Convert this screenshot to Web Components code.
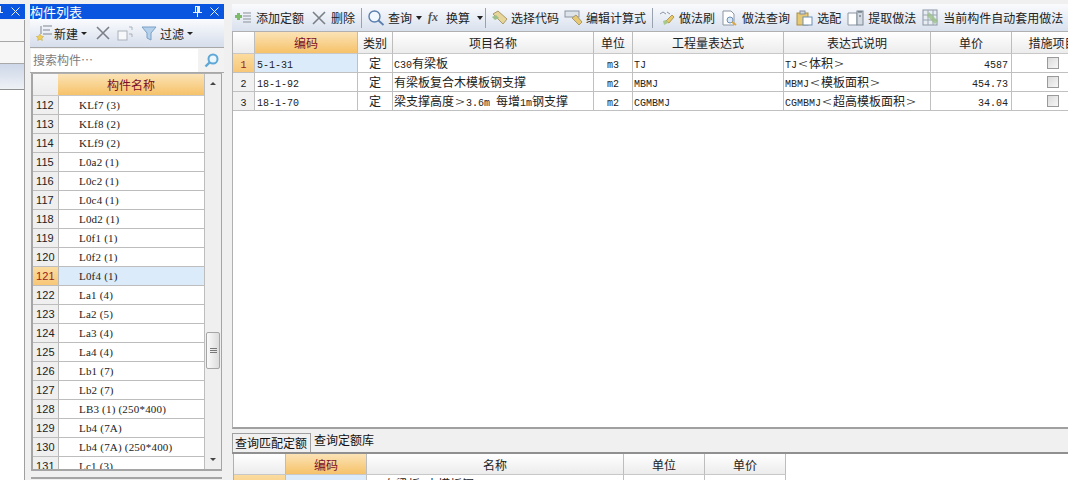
<!DOCTYPE html>
<html>
<head>
<meta charset="utf-8">
<style>
  html, body { margin: 0; height: 100%; overflow: hidden; background: #f0f0f0; }
  body { font: 12px "Noto Sans CJK SC", "Liberation Sans", sans-serif; color: #111; }
</style>
</head>
<body>
<app-shell>
  <dock-strip slot="strip"></dock-strip>
  <component-panel slot="list"></component-panel>
  <main-pane slot="main"></main-pane>
</app-shell>

<script>
const CELL_CSS = `
  .latin { font: 10px "Liberation Mono", monospace; }
  .cjk { font: 12px "Noto Sans CJK SC", sans-serif; }
  .wide { display: inline-block; width: 12px; text-align: center; font: 300 12px "Noto Sans CJK SC", sans-serif; transform: scale(1.4, 1.15); }
`;

// bitmap SimSun look: latin runs are 6px wide per char, CJK runs 12px, and <> sit in a full cell
function mixed(text) {
  return text.replace(/[\u4e00-\u9fff]+|[<>]|[^\u4e00-\u9fff<>]+/g, (run) => {
    if (run === '<') return '<span class="wide">&lt;</span>';
    if (run === '>') return '<span class="wide">&gt;</span>';
    return /[\u4e00-\u9fff]/.test(run) ? `<span class="cjk">${run}</span>` : `<span class="latin">${run}</span>`;
  });
}

const ICONS = {
  addList: `<svg width="19" height="16" viewBox="0 0 19 16"><path d="M9 3h8M9 6h8M9 9h8M9 12h8" stroke="#8a9199"/><path d="M3 3h3v2h2v3H6v2H3V8H1V5h2z" fill="#7dba6a"/></svg>`,
  x: `<svg width="14" height="14" viewBox="0 0 14 14"><path d="M1 1l12 12M13 1L1 13" stroke="#7b8088" stroke-width="1.6"/></svg>`,
  search: `<svg width="18" height="18" viewBox="0 0 18 18"><circle cx="7.500" cy="7.500" r="5.500" fill="#f2f8ff" stroke="#5b7fae" stroke-width="1.400"/><path d="M11.500 11.500l5 4.500" stroke="#5b7fae" stroke-width="1.800"/></svg>`,
  lens: `<svg width="15" height="15" viewBox="0 0 15 15"><circle cx="9" cy="6" r="4.500" fill="#eaf5fc" stroke="#5fa8d6" stroke-width="2"/><path d="M5.500 9.500l-4 4" stroke="#5fa8d6" stroke-width="2.400"/></svg>`,
  fx: `<span style="display:block;width:12px;font:italic bold 12px 'Liberation Serif',serif;color:#555">fx</span>`,
  pick: `<svg width="18" height="16" viewBox="0 0 18 16"><path d="M2 4l5-3 9 8-4 5z" fill="#e7d59a" stroke="#a99b6a"/><path d="M1 7l4-2 3 3-4 2z" fill="#9cc08a"/></svg>`,
  edit: `<svg width="20" height="16" viewBox="0 0 20 16"><rect x="1" y="1" width="14" height="6" fill="#dfe4ea" stroke="#8b95a3"/><path d="M8 8l4-3 6 7-3 3z" fill="#e7c873" stroke="#a99b6a"/></svg>`,
  brush: `<svg width="18" height="16" viewBox="0 0 18 16"><path d="M2 4l3-2 3 2M9 2l3 2" fill="none" stroke="#8a95a5"/><path d="M14 5l2 2-5 6-3-2z" fill="#e8c869" stroke="#b09a55"/><path d="M5 11l3-1 2 3-4 2z" fill="#a6c98c"/></svg>`,
  doc: `<svg width="17" height="16" viewBox="0 0 17 16"><path d="M2 1h8l3 3v11H2z" fill="#fff" stroke="#8b95a3"/><circle cx="9" cy="10" r="3" fill="#d8e8f7" stroke="#6d8fb5"/><path d="M11 12l4 3" stroke="#d8a848" stroke-width="2"/></svg>`,
  clip: `<svg width="17" height="16" viewBox="0 0 17 16"><rect x="1" y="3" width="11" height="12" fill="#e7c873" stroke="#a88f4e"/><rect x="4" y="1" width="5" height="3" fill="#cfd6de" stroke="#87909b"/><rect x="7" y="7" width="9" height="8" fill="#fff" stroke="#6d8fb5"/></svg>`,
  extract: `<svg width="18" height="16" viewBox="0 0 18 16"><path d="M1 3h9v12H1z" fill="#fff" stroke="#8b95a3"/><rect x="10" y="1" width="6" height="14" fill="#d3dae2" stroke="#7b8794"/><path d="M11 2h4M12 6h2" stroke="#4d5a68"/></svg>`,
  auto: `<svg width="18" height="17" viewBox="0 0 18 17"><rect x="1" y="1" width="14" height="15" fill="#e7edf3" stroke="#8b95a3"/><path d="M1 6h14M1 11h14M6 1v15M11 1v15" stroke="#9aa5b1"/><path d="M7 3l9 9-3 3-8-8z" fill="#9cc08a" opacity=".8"/></svg>`,
  newItem: `<svg width="18" height="18" viewBox="0 0 18 18"><path d="M8 2h9M8 6h7M8 10h9" stroke="#7f8791"/><path d="M6 2v8" stroke="#7f8791"/><path d="M5 10l1.300 2.200 2.400.3-1.800 1.700.5 2.300L5 15.300l-2.400 1.200.5-2.300-1.800-1.700 2.400-.3z" fill="#f0cf54" stroke="#c5a33a" stroke-width=".5"/></svg>`,
  copy: `<svg width="16" height="15" viewBox="0 0 16 15"><rect x="1" y="5" width="9" height="9" fill="#f7f8fa" stroke="#aab1ba"/><path d="M12 1h3v3M12 8h3v3" fill="none" stroke="#aab1ba"/></svg>`,
  filter: `<svg width="16" height="15" viewBox="0 0 16 15"><path d="M1 1h14L10 7v7l-4-2V7z" fill="#b4d0ea" stroke="#7ba0c6"/></svg>`,
  pin: `<svg width="9" height="11" viewBox="0 0 9 11"><path d="M2 0h5v6h2v1H5v4H4V7H0V6h2zM3 1v5h1V1z" fill="currentColor"/></svg>`,
  close: `<svg width="9" height="9" viewBox="0 0 9 9"><path d="M.5.5l8 8M8.500.5l-8 8" stroke="currentColor"/></svg>`
};

class AppShell extends HTMLElement {
  connectedCallback() {
    this.attachShadow({ mode: 'open' });
    this.shadowRoot.innerHTML = `
      <style>
        :host { display: flex; width: 1068px; height: 480px; padding-top: 4px; box-sizing: border-box; background: #f0f0f0; }
        ::slotted(*) { flex: none; }
        ::slotted(dock-strip) { margin-right: 5px; }
        ::slotted(component-panel) { margin-right: 8px; }
      </style>
      <slot name="strip"></slot>
      <slot name="list"></slot>
      <slot name="main"></slot>`;
  }
}

class TitleBar extends HTMLElement {
  connectedCallback() {
    this.attachShadow({ mode: 'open' });
    this.shadowRoot.innerHTML = `
      <style>
        :host { display: flex; align-items: center; height: 15px; background: #0a55e0; color: #fff; font: 13px/15px "Noto Sans CJK SC", sans-serif; }
        .t { flex: 1; white-space: nowrap; }
        .b { display: flex; align-items: center; gap: 8px; padding-right: 5px; color: #e8f0ff; }
        svg { display: block; }
      </style>
      <span class="t"><slot></slot></span>
      <span class="b">${ICONS.pin}${ICONS.close}</span>`;
  }
}

class DockStrip extends HTMLElement {
  connectedCallback() {
    this.attachShadow({ mode: 'open' });
    this.shadowRoot.innerHTML = `
      <style>
        :host { display: flex; flex-direction: column; width: 25px; height: 476px; box-sizing: border-box; }
        title-bar { flex: none; margin-left: -9px; }
        .body { flex: 1; margin-top: 1px; border-right: 1px solid #a0a0a0; background: #f0f0f0; }
        .r { height: 22px; box-sizing: border-box; border-bottom: 1px solid #a8a8a8; background: #f6f6f6; }
        .sel { height: 26px; box-sizing: border-box; background: linear-gradient(#cdd7e8, #eef1f6); border-bottom: 1px solid #909090; }
        .rest { height: calc(100% - 70px); background: #fff; }
      </style>
      <title-bar></title-bar>
      <div class="body">
        <div class="r"></div><div class="r"></div><div class="sel"></div><div class="rest"></div>
      </div>`;
  }
}

class ComponentPanel extends HTMLElement {
  connectedCallback() {
    const names = ['KLf7 (3)','KLf8 (2)','KLf9 (2)','L0a2 (1)','L0c2 (1)','L0c4 (1)','L0d2 (1)','L0f1 (1)','L0f2 (1)','L0f4 (1)','La1 (4)','La2 (5)','La3 (4)','La4 (4)','Lb1 (7)','Lb2 (7)','LB3 (1) (250*400)','Lb4 (7A)','Lb4 (7A) (250*400)','Lc1 (3)'];
    const rows = names.map((n, i) => {
      const num = 112 + i;
      return `<div class="row ${num === 121 ? 'sel' : ''}"><span class="no">${num}</span><span class="nm">${n}</span></div>`;
    }).join('');
    this.attachShadow({ mode: 'open' });
    this.shadowRoot.innerHTML = `
      <style>
        :host { display: flex; flex-direction: column; width: 194px; height: 476px; box-sizing: border-box; }
        .tools { display: flex; align-items: center; height: 28px; padding-left: 5px; box-sizing: border-box; background: linear-gradient(#fafbfd, #d6deec); font-size: 12px; color: #222; white-space: nowrap; }
        .tools svg { display: block; flex: none; }
        .caret { width: 0; height: 0; border: 3px solid transparent; border-top: 3px solid #222; border-bottom: 0; }
        .search { display: flex; align-items: center; height: 26px; padding-left: 1px; box-sizing: border-box; border-top: 1px solid #a8a8a8; border-bottom: 1px solid #a8a8a8; background: #f2f2f2; }
        .search .in { width: 167px; height: 23px; background: #fff; color: #7d7d7d; line-height: 22px; padding-left: 2px; box-sizing: border-box; font-size: 12px; }
        .search svg { margin-left: 6px; }
        .grid { flex: none; display: flex; height: 398px; margin: 0 2px 0 1px; border: 2px solid #a5a5a5; border-top: 1px solid #b0b0b0; border-right: 1px solid #a5a5a5; box-sizing: border-box; background: #fff; overflow: hidden; }
        .cols { width: 171px; flex: none; overflow: hidden; }
        .head { display: flex; height: 22px; }
        .head .c0 { width: 25px; background: linear-gradient(#f7f7f7, #ececec); border-bottom: 1px solid #c8c8c8; box-sizing: border-box; }
        .head .c1 { flex: 1; background: linear-gradient(#fbe3b6, #f6c269); color: #7a0f2a; text-align: center; font-size: 12px; line-height: 22px; border-bottom: 1px solid #c8c8c8; box-sizing: border-box; }
        .row { display: flex; height: 19px; box-sizing: border-box; border-bottom: 1px solid #bdbdbd; }
        .no { width: 25px; flex: none; background: #efefef; padding-left: 3px; box-sizing: border-box; font: 11px/18px "Liberation Sans", sans-serif; letter-spacing: .1px; color: #222; }
        .nm { flex: 1; padding-left: 20px; font: 11px/18px "Liberation Serif", serif; color: #222; border-left: 1px solid #b8b8b8; white-space: nowrap; letter-spacing: .2px; }
        .sel .no { background: linear-gradient(#fbdc9f, #f8c777); color: #9a1c1c; }
        .sel .nm { background: #dcebf9; }
        .bar { flex: 1; position: relative; background: #efefef; border-left: 1px solid #bdbdbd; }
        .up, .dn { position: absolute; left: 5px; width: 0; height: 0; border: 3px solid transparent; }
        .up { top: 8px; border-bottom: 3px solid #444; border-top: 0; }
        .dn { bottom: 8px; border-top: 3px solid #444; border-bottom: 0; }
        .thumb { position: absolute; top: 258px; left: 1px; width: 14px; height: 37px; border: 1px solid #a5a5a5; box-sizing: border-box; border-radius: 2px; background: linear-gradient(90deg, #fafafa, #dcdcdc); display: flex; flex-direction: column; gap: 1px; align-items: center; justify-content: center; }
        .thumb i { display: block; width: 7px; height: 1px; background: #777; }
        .foot { margin: 6px 2px 0 1px; border-top: 2px solid #a5a5a5; }
      </style>
      <title-bar>构件列表</title-bar>
      <div class="tools">
        ${ICONS.newItem}<span style="margin-left:1px">新建</span><span class="caret" style="margin-left:3px"></span>
        <span style="margin-left:9px;display:flex">${ICONS.x}</span>
        <span style="margin-left:7px;display:flex">${ICONS.copy}</span>
        <span style="margin-left:8px;display:flex">${ICONS.filter}</span>
        <span style="margin-left:3px">过滤</span><span class="caret" style="margin-left:3px"></span>
      </div>
      <div class="search"><div class="in">搜索构件…</div>${ICONS.lens}</div>
      <div class="grid">
        <div class="cols">
          <div class="head"><div class="c0"></div><div class="c1">构件名称</div></div>
          ${rows}
        </div>
        <div class="bar"><span class="up"></span><span class="dn"></span><div class="thumb"><i></i><i></i><i></i></div></div>
      </div>
      <div class="foot"></div>`;
  }
}

class ToolItem extends HTMLElement {
  connectedCallback() {
    const icon = ICONS[this.getAttribute('icon')] || '';
    const caret = this.hasAttribute('caret') ? '<b></b>' : '';
    this.attachShadow({ mode: 'open' });
    this.shadowRoot.innerHTML = `
      <style>
        :host { display: inline-flex; align-items: center; gap: 3px; white-space: nowrap; font-size: 12px; color: #222; }
        svg { display: block; flex: none; }
        b { width: 0; height: 0; border: 3px solid transparent; border-top: 4px solid #222; border-bottom: 0; margin-left: 1px; }
      </style>
      ${icon}<slot></slot>${caret}`;
  }
}

class DataGrid extends HTMLElement {
  constructor() { super(); this.attachShadow({ mode: 'open' }); }
  set config({ cols, head, rows, width, headHeight }) {
    const tpl = cols.map((w) => w + 'px').join(' ');
    const headCells = head.map((h) => `<div class="h ${h.hot ? 'hot' : ''}">${h.t}</div>`).join('');
    const body = rows.map((r) => r.map((c, ci) => {
      const a = head[ci].align || 'l';
      const inner = c === '[]' ? '<span class="chk"></span>' : mixed(c);
      const cls = ['d', a, ci === 0 ? 'no' : '', ci === 1 ? 'k' : '', r.sel && ci === 0 ? 'selno' : '', r.sel && ci === 1 ? 'selc' : ''].join(' ');
      return `<div class="${cls}">${inner}</div>`;
    }).join('')).join('');
    this.shadowRoot.innerHTML = `
      <style>
        ${CELL_CSS}
        :host { display: block; overflow: hidden; }
        .g { display: grid; grid-template-columns: ${tpl}; grid-auto-rows: 19px; width: ${width}px; }
        .hd { display: grid; grid-template-columns: ${tpl}; height: ${headHeight}px; width: ${width}px; }
        .h { box-sizing: border-box; text-align: center; line-height: ${headHeight}px; font-size: 12px; color: #222; background: linear-gradient(#fff, #ececec); border-right: 1px solid #bdbdbd; border-bottom: 1px solid #c8c8c8; white-space: nowrap; overflow: hidden; }
        .h.hot { background: linear-gradient(#fbe3b6, #f6c269); color: #7a0f2a; }
        .d { box-sizing: border-box; border-right: 1px solid #c0c0c0; border-bottom: 1px solid #c0c0c0; line-height: 18px; padding: 0 1px; white-space: nowrap; overflow: hidden; color: #222; background: #fff; }
        .k { padding-left: 2px; }
        .c { text-align: center; }
        .r { text-align: right; padding-right: 3px; }
        .in { padding-left: 17px; }
        .no { text-align: center; background: #f1f1f1; }
        .selno { background: linear-gradient(#fbdc9f, #f8c777); color: #9a1c1c; }
        .selc { background: #dcebf9; }
        .chk { display: inline-block; width: 12px; height: 12px; margin-top: 3px; box-sizing: border-box; border: 1px solid #9a9a9a; background: linear-gradient(135deg, #dadada, #f7f7f7); vertical-align: top; }
      </style>
      <div class="hd">${headCells}</div>
      <div class="g">${body}</div>`;
  }
}

class MainPane extends HTMLElement {
  connectedCallback() {
    this.attachShadow({ mode: 'open' });
    this.shadowRoot.innerHTML = `
      <style>
        :host { display: flex; flex-direction: column; width: 836px; height: 476px; overflow: hidden; box-sizing: border-box; }
        .bar { flex: none; display: flex; align-items: center; gap: 5px; height: 27px; padding-left: 2px; background: linear-gradient(#fafbfd, #d9e1ee); overflow: hidden; }
        .sep { width: 1px; height: 20px; background: #9aa3ad; }
        .top { flex: none; height: 398px; border: 1px solid #b0b0b0; border-right: 0; border-bottom: 2px solid #a0a0a0; box-sizing: border-box; background: #fff; overflow: hidden; }
        .tabs { flex: none; display: flex; align-items: flex-end; height: 25px; background: #f0f0f0; border-bottom: 2px solid #909090; box-sizing: border-box; }
        .tab { font-size: 12px; line-height: 18px; white-space: nowrap; }
        .tab.on { border: 1px solid #a0a0a0; border-bottom: 0; padding: 0 3px 0 2px; }
        .tab.off { margin: 0 0 3px 0; padding: 0 3px; }
        .low { flex: 1; margin-left: 1px; background: #fff; overflow: hidden; border-left: 1px solid #b0b0b0; }
      </style>
      <div class="bar">
        <tool-item icon="addList">添加定额</tool-item>
        <tool-item icon="x" style="margin-left:3px;gap:5px">删除</tool-item>
        <span class="sep" style="margin-left:1px"></span>
        <tool-item icon="search" caret>查询</tool-item>
        <tool-item icon="fx" caret style="margin-left:1px;gap:6px">换算</tool-item>
        <span class="sep" style="margin-left:-3px"></span>
        <tool-item icon="pick" style="gap:2px">选择代码</tool-item>
        <tool-item icon="edit" style="gap:2px">编辑计算式</tool-item>
        <span class="sep" style="margin-left:1px"></span>
        <tool-item icon="brush">做法刷</tool-item>
        <tool-item icon="doc" style="margin-left:1px;gap:4px">做法查询</tool-item>
        <tool-item icon="clip" style="margin-left:1px;gap:4px">选配</tool-item>
        <tool-item icon="extract" style="margin-left:1px">提取做法</tool-item>
        <tool-item icon="auto" style="margin-left:1px">当前构件自动套用做法</tool-item>
      </div>
      <div class="top"><data-grid id="top"></data-grid></div>
      <div class="tabs"><span class="tab on">查询匹配定额</span><span class="tab off">查询定额库</span></div>
      <div class="low"><data-grid id="low"></data-grid></div>`;

    const rows = [
      ['1', '5-1-31', '定', 'C30有梁板', 'm3', 'TJ', 'TJ<体积>', '4587', '[]'],
      ['2', '18-1-92', '定', '有梁板复合木模板钢支撑', 'm2', 'MBMJ', 'MBMJ<模板面积>', '454.73', '[]'],
      ['3', '18-1-70', '定', '梁支撑高度>3.6m 每增1m钢支撑', 'm2', 'CGMBMJ', 'CGMBMJ<超高模板面积>', '34.04', '[]']
    ];
    rows[0].sel = true;
    this.shadowRoot.getElementById('top').config = {
      width: 863,
      headHeight: 22,
      cols: [22, 103, 35, 201, 39, 151, 147, 81, 82],
      head: [{ t: '', align: 'c' }, { t: '编码', hot: true }, { t: '类别', align: 'c' }, { t: '项目名称' }, { t: '单位', align: 'c' }, { t: '工程量表达式' }, { t: '表达式说明' }, { t: '单价', align: 'r' }, { t: '措施项目', align: 'c' }],
      rows
    };
    const low = [['', '', '有梁板 木模板钢', '', '']];
    low[0].sel = true;
    this.shadowRoot.getElementById('low').config = {
      width: 552,
      headHeight: 21,
      cols: [52, 81, 257, 81, 81],
      head: [{ t: '', align: 'c' }, { t: '编码', hot: true }, { t: '名称', align: 'in' }, { t: '单位', align: 'c' }, { t: '单价', align: 'c' }],
      rows: low
    };
  }
}

customElements.define('title-bar', TitleBar);
customElements.define('tool-item', ToolItem);
customElements.define('data-grid', DataGrid);
customElements.define('dock-strip', DockStrip);
customElements.define('component-panel', ComponentPanel);
customElements.define('main-pane', MainPane);
customElements.define('app-shell', AppShell);
</script>
</body>
</html>
